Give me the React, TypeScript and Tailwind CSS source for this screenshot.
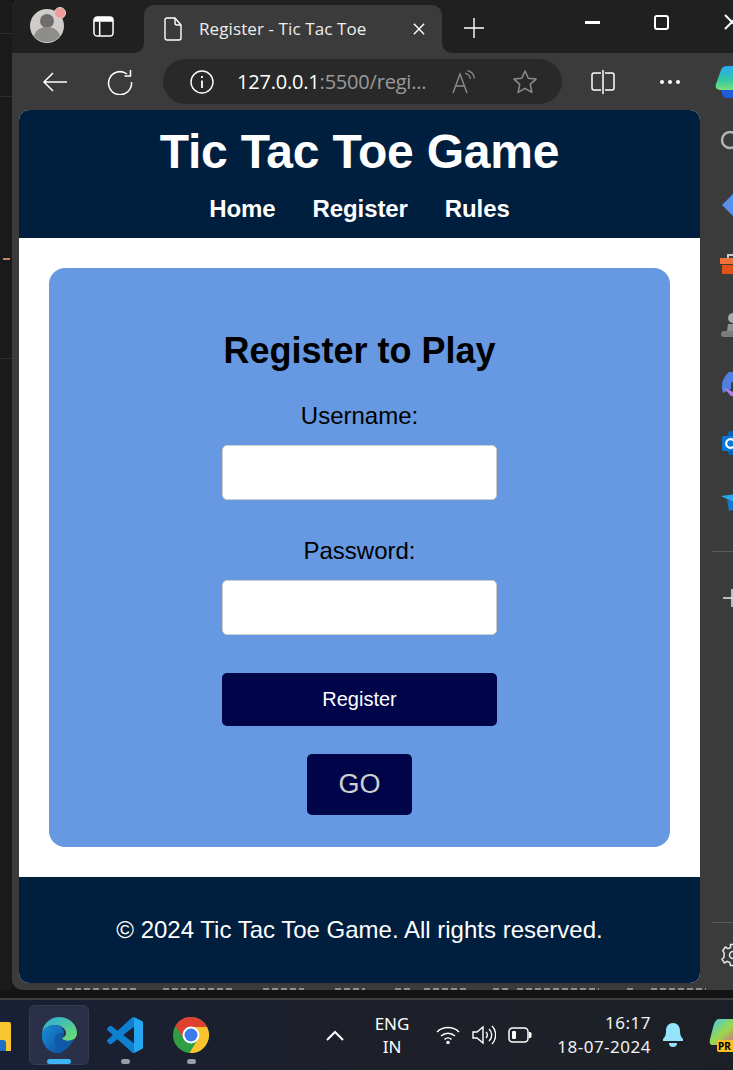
import { ReactNode } from "react";

function TabBar() {
  return (
    <div className="flex h-[53px] shrink-0 bg-[#3b3b3b]">
      <div className="flex w-[132px] items-center rounded-br-[10px] bg-[#202020] pl-[17px]">
        <svg width="36" height="36" viewBox="0 0 36 36" className="-mt-[1px] overflow-visible">
          <circle cx="18" cy="18" r="17" fill="#cfcdca" />
          <circle cx="18" cy="13" r="7" fill="#6f6d6b" />
          <path d="M5 28c2-7 8-9 13-9s11 2 13 9a17 17 0 0 1-26 0z" fill="#8f8d8a" />
          <circle cx="31" cy="5" r="5.5" fill="#f59a9a" stroke="#d8d6d3" strokeWidth="1" />
        </svg>
        <svg width="21" height="21" viewBox="0 0 22 22" fill="none" className="ml-[28px] -mt-[1px]">
          <rect x="1" y="1" width="20" height="20" rx="3.5" stroke="#fff" strokeWidth="1.6" />
          <path d="M1 6h20V4.500A3.500 3.500 0 0 0 17.500 1h-13A3.500 3.500 0 0 0 1 4.500z" fill="#fff" />
          <path d="M7 6v15" stroke="#fff" strokeWidth="1.6" />
        </svg>
      </div>
      <div className="flex w-[298px] flex-col bg-[#202020] pt-[5px]">
        <div className="flex h-[48px] items-center rounded-t-[10px] bg-[#3b3b3b] pl-[20px] pr-[17px] text-white">
          <svg width="18" height="24" viewBox="0 0 18 24" fill="none" stroke="#fff" strokeWidth="1.4" strokeLinejoin="round">
            <path d="M3 1h8l6 7v13a2 2 0 0 1-2 2H3a2 2 0 0 1-2-2V3a2 2 0 0 1 2-2z" />
            <path d="M11 1v5a2 2 0 0 0 2 2h4" />
          </svg>
          <span className="ml-[17px] flex-1 text-[17px] tracking-[0.1px] font-['Open_Sans','Noto_Sans',sans-serif] text-[#eeeeee]">Register - Tic Tac Toe</span>
          <svg width="12" height="12" viewBox="0 0 14 14" stroke="#fff" strokeWidth="1.6">
            <path d="M1 1l12 12M13 1L1 13" />
          </svg>
        </div>
      </div>
      <div className="flex flex-1 items-center overflow-hidden rounded-bl-[10px] bg-[#202020]">
        <svg width="22" height="22" viewBox="0 0 22 22" stroke="#fff" strokeWidth="1.4" className="ml-[21px] mt-[2px] shrink-0">
          <path d="M11 1v20M1 11h20" />
        </svg>
        <div className="-mt-[9px] ml-[100px] h-[3px] w-[15px] shrink-0 bg-white" />
        <div className="-mt-[9px] ml-[54px] h-[15px] w-[15px] shrink-0 rounded-[3px] border-2 border-white" />
        <svg width="20" height="20" viewBox="0 0 20 20" stroke="#fff" strokeWidth="2" className="-mt-[9px] ml-[55px] shrink-0">
          <path d="M1 3l14 14M15 3L1 17" />
        </svg>
      </div>
    </div>
  );
}

function AddressBar() {
  return (
    <div className="flex h-[57px] shrink-0 items-center overflow-hidden bg-[#3b3b3b]">
      <svg width="26" height="22" viewBox="0 0 26 22" fill="none" stroke="#fff" strokeWidth="1.5" className="ml-[30px] shrink-0">
        <path d="M25 11H2M11 2l-9 9 9 9" />
      </svg>
      <svg width="26" height="26" viewBox="0 0 26 26" fill="none" stroke="#fff" strokeWidth="1.5" className="ml-[39px] shrink-0">
        <path d="M20 5a11.500 11.500 0 1 0 4.500 8" />
        <path d="M23.500 1v6h-6" />
      </svg>
      <div className="ml-[30px] flex h-[45px] w-[399px] shrink-0 items-center rounded-full bg-[#292929] pl-[27px]">
        <svg width="24" height="24" viewBox="0 0 24 24" fill="none" stroke="#fff" strokeWidth="1.4" className="shrink-0">
          <circle cx="12" cy="12" r="11" />
          <path d="M12 10.500V18M12 6v2" strokeWidth="1.8" />
        </svg>
        <span className="ml-[23px] w-[193px] text-[20px] font-['Open_Sans','Noto_Sans',sans-serif] tracking-[-0.2px] whitespace-nowrap text-white">
          127.0.0.1<span className="text-[#9a9a9a]">:5500/regi...</span>
        </span>
        <svg width="24" height="24" viewBox="0 0 24 24" fill="none" stroke="#8c8c8c" strokeWidth="1.4" className="ml-[22px] shrink-0">
          <path d="M1 23l7-19 7 19M4 16h8" />
          <path d="M13 3c3 1 5 3 5.500 6M15.500 0.500c4 1 6.500 4 7 8" strokeWidth="1.3" />
        </svg>
        <svg width="26" height="26" viewBox="0 0 26 26" fill="none" stroke="#8c8c8c" strokeWidth="1.5" strokeLinejoin="round" className="ml-[36px] shrink-0">
          <path d="M13 2l3.300 7.300 7.700.8-5.800 5.300 1.700 8L13 19.300 6.100 23.400l1.700-8L2 10.100l7.700-.8z" />
        </svg>
      </div>
      <svg width="24" height="24" viewBox="0 0 24 24" fill="none" stroke="#fff" strokeWidth="1.5" className="ml-[29px] shrink-0">
        <path d="M10 3H3a2 2 0 0 0-2 2v13a2 2 0 0 0 2 2h7M14 3h7a2 2 0 0 1 2 2v13a2 2 0 0 1-2 2h-7M12 0v24" />
      </svg>
      <div className="ml-[45px] flex shrink-0 gap-[4px]">
        <span className="h-[4px] w-[4px] rounded-full bg-white" />
        <span className="h-[4px] w-[4px] rounded-full bg-white" />
        <span className="h-[4px] w-[4px] rounded-full bg-white" />
      </div>
      <svg width="30" height="34" viewBox="0 0 30 34" className="ml-[35px] shrink-0">
        <defs>
          <linearGradient id="copilotTop" x1="0" y1="0" x2="0" y2="1">
            <stop offset="0" stopColor="#27a9f5" />
            <stop offset="0.6" stopColor="#35c9a0" />
            <stop offset="1" stopColor="#7de07a" />
          </linearGradient>
        </defs>
        <path d="M12 1h18v24H5C1 25 0 22 1 19l5-14c1-3 3-4 6-4z" fill="url(#copilotTop)" />
        <path d="M6 25h24v8H11c-3 0-4-3-5-8z" fill="#1d5bd8" />
      </svg>
    </div>
  );
}

function PageHeader() {
  return (
    <header className="bg-[#001f3f] pb-[15px] pt-[14px] text-center text-white">
      <h1 className="text-[48px] leading-[55px] font-bold tracking-[-0.2px]">Tic Tac Toe Game</h1>
      <nav className="mt-[16px] flex justify-center gap-[37px] text-[24px] leading-[28px] font-bold tracking-[-0.1px]">
        <a>Home</a>
        <a>Register</a>
        <a>Rules</a>
      </nav>
    </header>
  );
}

function RegisterCard() {
  return (
    <section className="flex h-[579px] flex-col items-center rounded-[16px] bg-[#6699e1] pt-[60px] text-black">
      <h2 className="text-[36px] leading-[45px] font-bold">Register to Play</h2>
      <label className="mt-[29px] text-[24px] leading-[28px]">Username:</label>
      <input type="text" className="mt-[15px] h-[55px] w-[275px] rounded-[5px] border border-[#cccccc] bg-white" />
      <label className="mt-[37px] text-[24px] leading-[28px]">Password:</label>
      <input type="password" className="mt-[15px] h-[55px] w-[275px] rounded-[5px] border border-[#cccccc] bg-white" />
      <button className="mt-[38px] h-[53px] w-[275px] rounded-[5px] bg-[#00054a] pb-[2px] text-[20px] text-white">Register</button>
      <button className="mt-[28px] h-[61px] w-[105px] rounded-[5px] bg-[#00054a] text-[27px] text-[#cfcfcf]">GO</button>
    </section>
  );
}

function SideIcon({ className, children }: { className: string; children: ReactNode }) {
  return <div className={`flex items-center pl-[20px] ${className}`}>{children}</div>;
}

function EdgeSidebar() {
  return (
    <aside className="w-[33px] shrink-0 overflow-hidden">
      <SideIcon className="h-[60px]">
        <svg width="24" height="24" viewBox="0 0 24 24" fill="none" stroke="#b5b5b5" strokeWidth="2.400" className="-ml-[2px] shrink-0">
          <circle cx="12" cy="12" r="8" />
        </svg>
      </SideIcon>
      <SideIcon className="h-[70px]">
        <svg width="24" height="28" viewBox="0 0 24 28" className="ml-[1px] shrink-0">
          <path d="M1 14L14 1h10v26H14z" fill="#5b8fee" />
        </svg>
      </SideIcon>
      <SideIcon className="h-[48px]">
        <svg width="24" height="22" viewBox="0 0 24 22" className="shrink-0">
          <path d="M8 5V2h8v3" fill="none" stroke="#c8c8c8" strokeWidth="2" />
          <rect x="0" y="5" width="24" height="6" fill="#f0703a" />
          <rect x="2" y="12" width="22" height="9" fill="#e0521a" />
        </svg>
      </SideIcon>
      <SideIcon className="h-[74px]">
        <svg width="24" height="26" viewBox="0 0 24 26" className="ml-[1px] shrink-0">
          <circle cx="12" cy="6" r="5" fill="#a8a8a8" />
          <path d="M7 12h10l1 7H6z" fill="#909090" />
          <rect x="0" y="19" width="24" height="6" rx="3" fill="#7c7c7c" />
        </svg>
      </SideIcon>
      <SideIcon className="h-[44px]">
        <svg width="24" height="26" viewBox="0 0 24 26" className="ml-[1px] shrink-0">
          <path d="M8 1L24 1v8H14l-4 3v6L2 22c-2-6-2-14 6-21z" fill="#4f7fe0" />
          <path d="M2 16l10 5 12-1v5H10z" fill="#b57fe6" />
          <path d="M14 3h10v6h-8z" fill="#2a2f6e" />
        </svg>
      </SideIcon>
      <SideIcon className="h-[74px]">
        <svg width="24" height="24" viewBox="0 0 24 24" className="ml-[2px] shrink-0">
          <rect x="6" y="0" width="18" height="24" rx="2" fill="#0f5fb0" />
          <rect x="0" y="5" width="17" height="15" rx="2" fill="#0a78d4" />
          <circle cx="8.500" cy="12.500" r="4.300" fill="none" stroke="#fff" strokeWidth="2.200" />
        </svg>
      </SideIcon>
      <SideIcon className="h-[46px]">
        <svg width="24" height="20" viewBox="0 0 24 20" className="ml-[1px] shrink-0">
          <path d="M0 3l24-3v12L10 8z" fill="#27a9f0" />
          <path d="M6 7l5 1 13 4v2L8 18z" fill="#1777c9" />
        </svg>
      </SideIcon>
      <div className="ml-[12px] mt-[25px] h-px w-[21px] bg-[#5a5a5a]" />
      <SideIcon className="h-[92px]">
        <svg width="24" height="24" viewBox="0 0 24 24" stroke="#e8e8e8" strokeWidth="1.500" className="shrink-0">
          <path d="M12 3v18M3 12h21" />
        </svg>
      </SideIcon>
      <div className="ml-[12px] mt-[278px] h-px w-[21px] bg-[#5a5a5a]" />
      <SideIcon className="h-[64px]">
        <svg width="24" height="24" viewBox="0 0 24 24" fill="none" stroke="#e8e8e8" strokeWidth="1.500" className="ml-[1px] shrink-0">
          <path d="M9.500 1.500h5l.7 3 2.600 1.100 2.700-1.500 2.500 3.500-2.100 2.400v4l2.100 2.400-2.500 3.500-2.700-1.500-2.600 1.100-.7 3h-5l-.7-3-2.600-1.100-2.700 1.500-2.500-3.500 2.100-2.400v-4L1.800 7.600l2.500-3.500L7 5.600l2.600-1.100z" />
          <circle cx="12" cy="12" r="3.500" />
        </svg>
      </SideIcon>
    </aside>
  );
}

// the status bar of the window behind peeks out here, only a couple of pixels of it
const dash = "h-[2px] shrink-0 bg-[repeating-linear-gradient(90deg,#8f8f8f_0_6px,transparent_6px_9px)]";
const statusDashes = [
  "ml-[45px] w-[42px]",
  "ml-[4px] w-[34px]",
  "ml-[26px] w-[70px]",
  "ml-[30px] w-[41px]",
  "ml-[31px] w-[30px]",
  "ml-[30px] w-[18px]",
  "ml-[11px] w-[45px]",
  "ml-[24px] w-[15px]",
  "ml-[9px] w-[82px]",
  "ml-[28px] w-[9px]",
  "ml-[15px] w-[55px]",
];

function StatusRemnant() {
  return (
    <div className="flex h-[2px] shrink-0 overflow-hidden">
      {statusDashes.map((cls) => (
        <span key={cls} className={`${dash} ${cls}`} />
      ))}
    </div>
  );
}

function Taskbar() {
  return (
    <div className="flex h-[72px] shrink-0 items-center overflow-hidden border-t-[2px] border-[#3b3d42] bg-gradient-to-r from-[#191f35] via-[#1d2029] to-[#1c2026] font-['Noto_Sans','Open_Sans',sans-serif] text-white">
      <div className="mt-[3px] h-[29px] w-[11px] shrink-0 overflow-hidden rounded-tr-[2px] bg-[#f8c630]">
        <div className="mt-[18px] h-[11px] w-[6px] rounded-tr-[3px] bg-[#1f6fc4]" />
      </div>
      <div className="relative ml-[18px] flex h-[60px] w-[60px] shrink-0 items-center justify-center rounded-[6px] border border-[#343b53] bg-[#2a3048]">
        <svg width="36" height="36" viewBox="0 0 36 36" className="-ml-[1px]">
          <defs>
            <linearGradient id="edgeTop" x1="0" y1="0" x2="1" y2="1">
              <stop offset="0" stopColor="#2aa7e0" />
              <stop offset="1" stopColor="#6fe26a" />
            </linearGradient>
            <linearGradient id="edgeLow" x1="0" y1="0" x2="1" y2="1">
              <stop offset="0" stopColor="#1a8fd8" />
              <stop offset="1" stopColor="#0d4fa0" />
            </linearGradient>
          </defs>
          <path d="M1 16C2 6 10 0 18 0c10 0 18 7 18 16 0 5-4 8-9 8-3 0-6-1-6-3 3-1 4-3 4-5 0-5-6-8-11-8-6 0-11 3-13 8z" fill="url(#edgeTop)" />
          <path d="M1 16c2-5 7-8 13-8 5 0 9 3 9 8-2 0-8 0-9 5-1 6 3 13 9 14-3 1-5 1-6 1C8 36 0 28 1 16z" fill="url(#edgeLow)" />
          <path d="M14 21c1-4 6-5 9-5 0 2-1 4-2 5 1 3 7 4 12 1-3 7-9 12-14 13-4-3-6-9-5-14z" fill="#0f5aa8" />
        </svg>
        <span className="absolute bottom-0 left-[17px] h-[5px] w-[24px] rounded-full bg-[#3cb4f5]" />
      </div>
      <div className="relative ml-[18px] flex w-[36px] shrink-0 justify-center">
        <svg width="36" height="36" viewBox="0 0 100 100" fillRule="evenodd">
          <path d="M70.900 99.300a6.200 6.200 0 0 0 5-.2l20.600-9.900a6.200 6.200 0 0 0 3.500-5.600V16.400a6.200 6.200 0 0 0-3.500-5.600L76 .9a6.200 6.200 0 0 0-7.100 1.200L29.400 38.100 12.200 25.100a4.200 4.200 0 0 0-5.300.2L1.400 30.300a4.200 4.200 0 0 0 0 6.200L16.300 50 1.400 63.500a4.200 4.200 0 0 0 0 6.200l5.500 5a4.200 4.200 0 0 0 5.300.2l17.200-13 39.500 36a6.200 6.200 0 0 0 2 1.400zM75 27.300 45 50l30 22.700z" fill="#0f7fcf" />
          <path d="M75 .5l21.500 10.300a6.200 6.200 0 0 1 3.500 5.600v67.200a6.200 6.200 0 0 1-3.500 5.600L76 99.100a6.200 6.200 0 0 1-1 .4z" fill="#24a6ee" />
        </svg>
        <span className="absolute -bottom-[11px] left-[14px] h-[5px] w-[9px] rounded-full bg-[#9a9da6]" />
      </div>
      <div className="relative ml-[30px] flex w-[36px] shrink-0 justify-center">
        <svg width="36" height="36" viewBox="0 0 36 36">
          <circle cx="18" cy="18" r="18" fill="#2f9e44" />
          <path d="M18 10h16A18 18 0 0 0 2.400 9L11 22a8 8 0 0 1 7-12z" fill="#e0412f" />
          <path d="M34 10A18 18 0 0 1 16.400 36L25 22a8 8 0 0 0-7-12z" fill="#fbc32d" />
          <circle cx="18" cy="18" r="8.500" fill="#fff" />
          <circle cx="18" cy="18" r="6.500" fill="#3b7bea" />
        </svg>
        <span className="absolute -bottom-[11px] left-[14px] h-[5px] w-[9px] rounded-full bg-[#9a9da6]" />
      </div>
      <svg width="18" height="11" viewBox="0 0 18 11" fill="none" stroke="#fff" strokeWidth="2" className="ml-[117px] shrink-0">
        <path d="M1 10l8-8 8 8" />
      </svg>
      <div className="ml-[30px] w-[36px] shrink-0 text-center text-[17px] leading-[23px]">
        ENG
        <br />
        IN
      </div>
      <svg width="24" height="18" viewBox="0 0 24 18" fill="none" stroke="#fff" strokeWidth="1.500" className="ml-[26px] shrink-0">
        <path d="M1 6a16 16 0 0 1 22 0M5 10a10 10 0 0 1 14 0M8.500 13.500a5 5 0 0 1 7 0" />
        <circle cx="12" cy="16.500" r="1" fill="#fff" />
      </svg>
      <svg width="24" height="24" viewBox="0 0 24 24" fill="none" stroke="#fff" strokeWidth="1.400" className="ml-[12px] shrink-0">
        <path d="M1 9v6h4l6 5V4L5 9z" />
        <path d="M14 9a4 4 0 0 1 0 6M17 6a8 8 0 0 1 0 12M20 3a13 13 0 0 1 0 18" />
      </svg>
      <svg width="24" height="16" viewBox="0 0 24 16" fill="none" className="ml-[12px] shrink-0">
        <rect x="1" y="1" width="19" height="14" rx="3.500" stroke="#fff" strokeWidth="1.500" />
        <rect x="4" y="4" width="4" height="8" rx="1" fill="#fff" />
        <path d="M21 5h1a1.500 1.500 0 0 1 1.500 1.500v3A1.500 1.500 0 0 1 22 11h-1z" fill="#fff" />
      </svg>
      <div className="ml-[24px] w-[95px] shrink-0 text-right text-[17px] leading-[24px] tracking-[0.5px] text-[#f2f2f2]">
        16:17
        <br />
        18-07-2024
      </div>
      <svg width="22" height="26" viewBox="0 0 22 26" className="ml-[11px] shrink-0">
        <path d="M11 1c5 0 7 4 7 8 0 4 1 6 3 8v2H1v-2c2-2 3-4 3-8 0-4 2-8 7-8z" fill="#96e4fb" />
        <path d="M7 21h8a4 4 0 0 1-8 0z" fill="#96e4fb" />
      </svg>
      <div className="relative ml-[25px] h-[34px] w-[30px] shrink-0">
        <svg width="30" height="28" viewBox="0 0 30 28">
          <defs>
            <linearGradient id="copilotPro" x1="0" y1="0" x2="1" y2="1">
              <stop offset="0" stopColor="#3bc7f0" />
              <stop offset="0.5" stopColor="#9bd94a" />
              <stop offset="1" stopColor="#e8479c" />
            </linearGradient>
          </defs>
          <path d="M10 1h20v16L20 27H4c-3 0-4-2-3-6l4-15c1-3 3-5 5-5z" fill="url(#copilotPro)" />
        </svg>
        <span className="absolute bottom-0 left-[8px] h-[12px] w-[26px] rounded-[2px] bg-[#fbbf24] pl-[1px] text-[10px] leading-[12px] font-bold text-black">PR</span>
      </div>
    </div>
  );
}

export default function App() {
  return (
    <div className="flex h-[1070px] w-[733px] flex-col overflow-hidden bg-[#141414] font-['Liberation_Sans',Arial,sans-serif]">
      <div className="flex h-[990px] shrink-0">
        <div className="flex w-[12px] shrink-0 flex-col bg-[#1a1a1a]">
          <div className="mt-[33px] h-px bg-[#2c2c2c]" />
          <div className="mt-[62px] h-px bg-[#2c2c2c]" />
          <div className="ml-[3px] mt-[161px] h-[2px] w-[7px] bg-[#c9825f]" />
          <div className="mt-[98px] h-px bg-[#2c2c2c]" />
        </div>
        <div className="flex min-w-0 flex-1 flex-col overflow-hidden rounded-bl-[10px] rounded-tl-[6px] bg-[#3b3b3b]">
          <TabBar />
          <AddressBar />
          <div className="flex h-[878px] shrink-0">
            <div className="ml-[7px] flex h-[873px] w-[681px] shrink-0 flex-col overflow-hidden rounded-[10px] bg-white">
              <PageHeader />
              <main className="flex-1 p-[30px]">
                <RegisterCard />
              </main>
              <footer className="flex h-[106px] items-center justify-center bg-[#001f3f] text-[24px] text-white">
                © 2024 Tic Tac Toe Game. All rights reserved.
              </footer>
            </div>
            <EdgeSidebar />
          </div>
          <StatusRemnant />
        </div>
      </div>
      <div className="h-[8px] shrink-0 bg-[#141414]" />
      <Taskbar />
    </div>
  );
}
